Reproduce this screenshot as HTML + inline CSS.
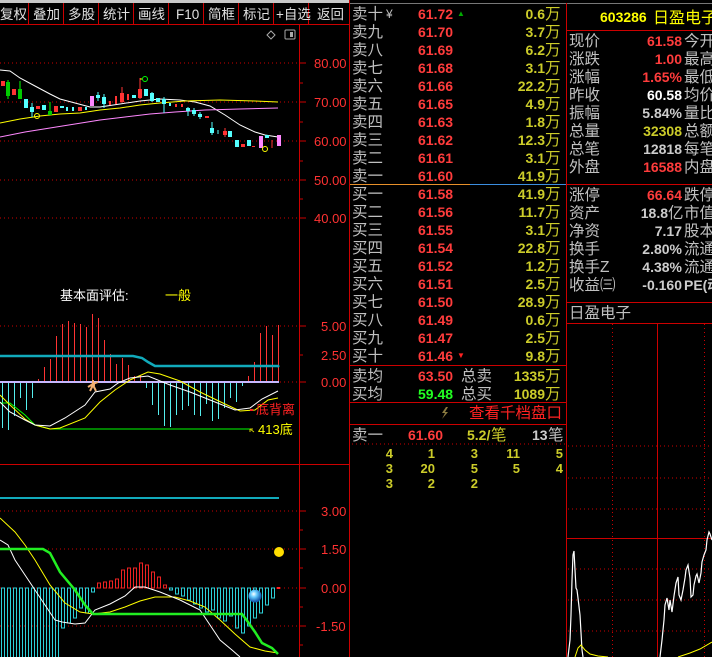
<!DOCTYPE html>
<html><head><meta charset="utf-8"><style>
html,body{margin:0;padding:0;background:#000;width:712px;height:657px;overflow:hidden}
svg{display:block}
.l{font-family:"Liberation Sans","WenQuanYi Zen Hei","Noto Sans CJK SC",sans-serif;font-size:15.5px;fill:#c0c0c0}
.n{font-family:"Liberation Sans",sans-serif;font-size:14px;font-weight:bold}
.ax{font-family:"Liberation Sans",sans-serif;font-size:13px;fill:#ff3232}
.tb{font-family:"Liberation Sans","WenQuanYi Zen Hei","Noto Sans CJK SC",sans-serif;font-size:13.5px;fill:#e0e0e0}
</style></head><body>
<svg width="712" height="657" viewBox="0 0 712 657" xmlns="http://www.w3.org/2000/svg">
<rect width="712" height="657" fill="#000"/>
<rect x="0" y="0" width="350" height="3" fill="#c8c8c8"/>
<line x1="0" y1="24.5" x2="350" y2="24.5" stroke="#c00" />
<g stroke="#c00">
<line x1="28.5" y1="3" x2="28.5" y2="24"/><line x1="63.5" y1="3" x2="63.5" y2="24"/><line x1="98.5" y1="3" x2="98.5" y2="24"/><line x1="133.5" y1="3" x2="133.5" y2="24"/><line x1="168.5" y1="3" x2="168.5" y2="24"/><line x1="203.5" y1="3" x2="203.5" y2="24"/><line x1="238.5" y1="3" x2="238.5" y2="24"/><line x1="273.5" y1="3" x2="273.5" y2="24"/><line x1="308.5" y1="3" x2="308.5" y2="24"/><line x1="349.5" y1="0" x2="349.5" y2="657"/>
</g>
<g class="tb">
<text x="0" y="19">复权</text><text x="33" y="19">叠加</text><text x="68" y="19">多股</text><text x="103" y="19">统计</text><text x="138" y="19">画线</text><text x="176" y="19">F10</text><text x="208" y="19">简框</text><text x="243" y="19">标记</text><text x="276" y="19">+自选</text><text x="317" y="19">返回</text>
</g>
<line x1="299.5" y1="25" x2="299.5" y2="657" stroke="#c00"/>
<g stroke="#c00" stroke-dasharray="1,3">
<line x1="0" y1="63" x2="300" y2="63"/><line x1="0" y1="102" x2="300" y2="102"/><line x1="0" y1="141" x2="300" y2="141"/><line x1="0" y1="180" x2="300" y2="180"/><line x1="0" y1="218" x2="300" y2="218"/>
</g>
<g stroke="#c00"><line x1="300" y1="63" x2="306" y2="63"/><line x1="300" y1="83" x2="303" y2="83"/><line x1="300" y1="102" x2="306" y2="102"/><line x1="300" y1="122" x2="303" y2="122"/><line x1="300" y1="141" x2="306" y2="141"/><line x1="300" y1="161" x2="303" y2="161"/><line x1="300" y1="180" x2="306" y2="180"/><line x1="300" y1="199" x2="303" y2="199"/><line x1="300" y1="218" x2="306" y2="218"/></g>
<g class="ax"><text x="314" y="68">80.00</text><text x="314" y="107">70.00</text><text x="314" y="146">60.00</text><text x="314" y="185">50.00</text><text x="314" y="223">40.00</text></g>
<path d="M267 35 L271 31 L275 35 L271 39Z" fill="none" stroke="#aaa"/>
<rect x="285" y="30" width="10" height="9" fill="none" stroke="#aaa" rx="1"/><rect x="290" y="32" width="3" height="5" fill="#aaa"/>
<polyline fill="none" stroke="#fff" points="0,70 10,71 20,78 35,86 50,94 60,99 75,103 90,107 100,107 120,104 140,101 160,99 180,100 195,102 210,106 225,115 240,125 255,132 265,135 278,137"/>
<polyline fill="none" stroke="#ff0" points="0,123 20,119 40,116 60,114 80,113 100,110 120,108 140,105 160,103 185,101 220,100 255,101 278,102"/>
<polyline fill="none" stroke="#f8f" points="0,137 25,132 50,128 75,124 100,120 125,117 150,114 175,112 205,110 240,109 278,108"/>
<g>
<rect x="1" y="81" width="4" height="5" fill="#f33"/>
<line x1="8" y1="80" x2="8" y2="99" stroke="#0f0"/><rect x="6" y="82" width="4" height="14" fill="#0c0"/>
<rect x="12" y="89" width="4" height="6" fill="#f33"/>
<line x1="20" y1="81" x2="20" y2="99" stroke="#0f0"/><rect x="18" y="89" width="4" height="10" fill="#0c0"/>
<rect x="24" y="99" width="4" height="9" fill="#5ff"/>
<line x1="32" y1="103" x2="32" y2="117" stroke="#5ff"/><rect x="30" y="107" width="4" height="5" fill="#5ff"/>
<rect x="36" y="106" width="4" height="3" fill="#f33"/>
<rect x="42" y="105" width="4" height="5" fill="#5ff"/>
<line x1="50" y1="102" x2="50" y2="115" stroke="#0f0"/><rect x="48" y="111" width="4" height="4" fill="#0c0"/>
<rect x="54" y="106" width="4" height="6" fill="#f33"/>
<rect x="60" y="106" width="4" height="2" fill="#5ff"/><rect x="66" y="107" width="2" height="4" fill="#5ff"/><rect x="72" y="107" width="2" height="4" fill="#5ff"/>
<rect x="78" y="107" width="4" height="4" fill="#f33"/><rect x="85" y="107" width="2" height="3" fill="#5ff"/>
<rect x="90" y="96" width="4" height="10" fill="#f8f"/>
<line x1="98" y1="92" x2="98" y2="101" stroke="#5ff"/><rect x="96" y="95" width="4" height="3" fill="#5ff"/>
<line x1="104" y1="94" x2="104" y2="108" stroke="#5ff"/><rect x="102" y="97" width="4" height="7" fill="#5ff"/>
<rect x="109" y="101" width="2" height="4" fill="#f33"/><rect x="115" y="96" width="2" height="8" fill="#f33"/>
<line x1="122" y1="87" x2="122" y2="103" stroke="#f33"/><rect x="120" y="93" width="4" height="9" fill="#f33"/>
<rect x="127" y="94" width="2" height="6" fill="#f33"/><rect x="132" y="95" width="4" height="3" fill="#5ff"/>
<line x1="140" y1="78" x2="140" y2="99" stroke="#f33"/><rect x="138" y="89" width="4" height="9" fill="#f33"/>
<rect x="144" y="89" width="4" height="7" fill="#5ff"/>
<line x1="152" y1="92" x2="152" y2="102" stroke="#5ff"/><rect x="150" y="93" width="4" height="8" fill="#5ff"/>
<rect x="156" y="98" width="4" height="4" fill="#5ff"/>
<line x1="164" y1="97" x2="164" y2="113" stroke="#5ff"/><rect x="162" y="99" width="4" height="5" fill="#5ff"/>
<rect x="169" y="103" width="2" height="3" fill="#5ff"/><rect x="175" y="104" width="2" height="3" fill="#f33"/><rect x="181" y="104" width="2" height="3" fill="#f33"/>
<line x1="188" y1="107" x2="188" y2="116" stroke="#5ff"/><rect x="186" y="108" width="4" height="3" fill="#5ff"/>
<line x1="194" y1="108" x2="194" y2="116" stroke="#5ff"/><rect x="192" y="110" width="4" height="4" fill="#5ff"/>
<line x1="200" y1="112" x2="200" y2="119" stroke="#5ff"/><rect x="198" y="114" width="4" height="3" fill="#5ff"/>
<rect x="205" y="116" width="4" height="2" fill="#f33"/>
<line x1="212" y1="122" x2="212" y2="135" stroke="#5ff"/><rect x="210" y="128" width="4" height="5" fill="#5ff"/>
<line x1="218" y1="130" x2="218" y2="134" stroke="#5ff"/>
<line x1="225" y1="128" x2="225" y2="137" stroke="#f33"/><rect x="223" y="131" width="4" height="4" fill="#f33"/>
<rect x="228" y="131" width="4" height="6" fill="#5ff"/>
<rect x="235" y="140" width="4" height="7" fill="#5ff"/>
<rect x="241" y="144" width="4" height="3" fill="#f33"/>
<rect x="247" y="140" width="4" height="6" fill="#5ff"/>
<rect x="252" y="146" width="3" height="1" fill="#f33"/>
<rect x="259" y="136" width="4" height="12" fill="#f8f"/>
<rect x="265" y="135" width="4" height="3" fill="#5ff"/>
<line x1="272" y1="140" x2="272" y2="148" stroke="#f33"/>
<rect x="277" y="135" width="4" height="11" fill="#f8f"/>
</g>
<circle cx="145" cy="79" r="2.5" fill="none" stroke="#0f0"/><line x1="140" y1="79" x2="142" y2="79" stroke="#ff0"/>
<circle cx="37" cy="116" r="2.5" fill="none" stroke="#ff0"/>
<circle cx="265" cy="149" r="2.5" fill="none" stroke="#ff0"/>
<text x="60" y="300" class="l" style="fill:#fff;font-size:13px">基本面评估:</text>
<text x="165" y="300" class="l" style="fill:#ff0;font-size:13px">一般</text>
<g stroke="#c00" stroke-dasharray="1,3"><line x1="0" y1="326" x2="300" y2="326"/><line x1="0" y1="382" x2="300" y2="382"/></g>
<g stroke="#c00"><line x1="300" y1="326" x2="306" y2="326"/><line x1="300" y1="355" x2="303" y2="355"/><line x1="300" y1="382" x2="306" y2="382"/></g>
<g class="ax"><text x="321" y="331">5.00</text><text x="321" y="360">2.50</text><text x="321" y="387">0.00</text></g>
<g stroke="#f33">
<line x1="38.5" y1="382" x2="38.5" y2="379"/><line x1="44.5" y1="382" x2="44.5" y2="367"/><line x1="50.5" y1="382" x2="50.5" y2="359"/><line x1="56.5" y1="382" x2="56.5" y2="336"/><line x1="62.5" y1="382" x2="62.5" y2="324"/><line x1="68.5" y1="382" x2="68.5" y2="321"/><line x1="74.5" y1="382" x2="74.5" y2="323"/><line x1="80.5" y1="382" x2="80.5" y2="324"/><line x1="86.5" y1="382" x2="86.5" y2="327"/><line x1="92.5" y1="382" x2="92.5" y2="314"/><line x1="98.5" y1="382" x2="98.5" y2="318"/><line x1="104.5" y1="382" x2="104.5" y2="340"/><line x1="110.5" y1="382" x2="110.5" y2="354"/><line x1="116.5" y1="382" x2="116.5" y2="364"/><line x1="122.5" y1="382" x2="122.5" y2="358"/><line x1="128.5" y1="382" x2="128.5" y2="365"/><line x1="134.5" y1="382" x2="134.5" y2="376"/><line x1="140.5" y1="382" x2="140.5" y2="375"/>
<line x1="248.5" y1="382" x2="248.5" y2="376"/><line x1="254.5" y1="382" x2="254.5" y2="362"/><line x1="260.5" y1="382" x2="260.5" y2="333"/><line x1="266.5" y1="382" x2="266.5" y2="326"/><line x1="272.5" y1="382" x2="272.5" y2="335"/><line x1="278.5" y1="382" x2="278.5" y2="325"/>
</g>
<g stroke="#5ee">
<line x1="2.5" y1="382" x2="2.5" y2="428"/><line x1="8.5" y1="382" x2="8.5" y2="430"/><line x1="14.5" y1="382" x2="14.5" y2="416"/><line x1="20.5" y1="382" x2="20.5" y2="398"/><line x1="26.5" y1="382" x2="26.5" y2="410"/><line x1="32.5" y1="382" x2="32.5" y2="398"/>
<line x1="146.5" y1="382" x2="146.5" y2="388"/><line x1="152.5" y1="382" x2="152.5" y2="405"/><line x1="158.5" y1="382" x2="158.5" y2="415"/><line x1="164.5" y1="382" x2="164.5" y2="426"/><line x1="170.5" y1="382" x2="170.5" y2="427"/><line x1="176.5" y1="382" x2="176.5" y2="415"/><line x1="182.5" y1="382" x2="182.5" y2="410"/><line x1="188.5" y1="382" x2="188.5" y2="406"/><line x1="194.5" y1="382" x2="194.5" y2="415"/><line x1="200.5" y1="382" x2="200.5" y2="416"/><line x1="206.5" y1="382" x2="206.5" y2="404"/><line x1="212.5" y1="382" x2="212.5" y2="421"/><line x1="218.5" y1="382" x2="218.5" y2="419"/><line x1="224.5" y1="382" x2="224.5" y2="408"/><line x1="230.5" y1="382" x2="230.5" y2="398"/><line x1="236.5" y1="382" x2="236.5" y2="402"/><line x1="242.5" y1="382" x2="242.5" y2="386"/>
</g>
<line x1="0" y1="382" x2="279" y2="382" stroke="#c8b8ff" stroke-width="2"/>
<polyline fill="none" stroke="#1ab" stroke-width="2.5" points="0,356 133,356 142,358 148,362 155,366 278,366 279,367"/>
<polyline fill="none" stroke="#0f0" points="0,403 10,403 25,415 35,425 50,429 250,429"/>
<polyline fill="none" stroke="#ff0" points="0,395 10,405 25,419 35,425 50,429 60,428 85,418 100,402 115,390 130,380 148,372 160,374 180,381 200,392 225,404 240,411 255,410 268,400 278,398"/>
<polyline fill="none" stroke="#fff" points="0,402 10,412 25,420 35,425 50,426 65,418 85,405 95,392 110,389 118,383 130,378 148,376 170,385 190,392 210,400 235,410 250,408 262,399 278,391"/>
<path d="M93 385 l-3 6 M93 385 l3 6 M93 384 l-5 3 M93 384 l5 -2 M93 380 v5" stroke="#f3b070" stroke-width="2" fill="none"/>
<circle cx="93" cy="385" r="2" fill="#f3b070"/>
<text x="256" y="414" class="l" style="fill:#f22;font-size:13px">底背离</text>
<text x="258" y="434" class="l" style="fill:#ff0;font-size:13px">413底</text>
<path d="M250 429 l4 3 M250 429 l3 0 M250 429 l0 3" stroke="#cc0" fill="none"/>
<rect x="250" y="409" width="3" height="2" fill="#f22"/>
<line x1="0" y1="464.5" x2="350" y2="464.5" stroke="#c00"/>
<g stroke="#c00" stroke-dasharray="1,3"><line x1="0" y1="511" x2="300" y2="511"/><line x1="0" y1="549" x2="300" y2="549"/><line x1="0" y1="588" x2="300" y2="588"/><line x1="0" y1="626" x2="300" y2="626"/></g>
<g stroke="#c00"><line x1="300" y1="511" x2="306" y2="511"/><line x1="300" y1="530" x2="303" y2="530"/><line x1="300" y1="549" x2="306" y2="549"/><line x1="300" y1="568" x2="303" y2="568"/><line x1="300" y1="588" x2="306" y2="588"/><line x1="300" y1="607" x2="303" y2="607"/><line x1="300" y1="626" x2="306" y2="626"/><line x1="300" y1="645" x2="303" y2="645"/></g>
<g class="ax"><text x="321" y="516">3.00</text><text x="321" y="554">1.50</text><text x="321" y="593">0.00</text><text x="316" y="631">-1.50</text></g>
<line x1="0" y1="498" x2="279" y2="498" stroke="#1ab" stroke-width="2"/>
<g fill="none" stroke="#2cd0d8">
<rect x="1.5" y="588" width="3" height="87"/><rect x="7.5" y="588" width="3" height="80"/><rect x="13.5" y="588" width="3" height="88"/><rect x="19.5" y="588" width="3" height="80"/><rect x="25.5" y="588" width="3" height="88"/><rect x="31.5" y="588" width="3" height="80"/><rect x="37.5" y="588" width="3" height="88"/><rect x="43.5" y="588" width="3" height="80"/><rect x="49.5" y="588" width="3" height="88"/><rect x="55.5" y="588" width="3" height="80"/><rect x="61.5" y="588" width="3" height="40"/><rect x="67.5" y="588" width="3" height="35"/><rect x="73.5" y="588" width="3" height="30"/><rect x="79.5" y="588" width="3" height="20"/><rect x="85.5" y="588" width="3" height="25"/><rect x="91.5" y="588" width="3" height="4"/>
<rect x="169.5" y="588" width="3" height="2"/><rect x="175.5" y="588" width="3" height="6"/><rect x="181.5" y="588" width="3" height="8"/><rect x="187.5" y="588" width="3" height="12"/><rect x="193.5" y="588" width="3" height="16"/><rect x="199.5" y="588" width="3" height="20"/><rect x="205.5" y="588" width="3" height="24"/><rect x="211.5" y="588" width="3" height="22"/><rect x="217.5" y="588" width="3" height="30"/><rect x="223.5" y="588" width="3" height="33"/><rect x="229.5" y="588" width="3" height="28"/><rect x="235.5" y="588" width="3" height="40"/><rect x="241.5" y="588" width="3" height="45"/><rect x="247.5" y="588" width="3" height="38"/><rect x="253.5" y="588" width="3" height="30"/><rect x="259.5" y="588" width="3" height="25"/><rect x="265.5" y="588" width="3" height="17"/><rect x="271.5" y="588" width="3" height="10"/>
</g>
<g fill="none" stroke="#e22">
<rect x="97.5" y="583" width="3" height="5"/><rect x="103.5" y="582" width="3" height="6"/><rect x="109.5" y="581" width="3" height="7"/><rect x="115.5" y="579" width="3" height="9"/><rect x="121.5" y="570" width="3" height="18"/><rect x="127.5" y="568" width="3" height="20"/><rect x="133.5" y="568" width="3" height="20"/><rect x="139.5" y="563" width="3" height="25"/><rect x="145.5" y="565" width="3" height="23"/><rect x="151.5" y="572" width="3" height="16"/><rect x="157.5" y="577" width="3" height="11"/><rect x="163.5" y="585" width="3" height="3"/>
</g>
<rect x="277" y="587" width="3" height="2" fill="#f22"/>
<polyline fill="none" stroke="#ff0" points="0,518 15,532 25,545 35,560 50,585 65,603 80,612 93,614 110,612 125,607 140,601 155,597 175,597 190,601 205,607 220,620 235,634 250,647 265,651 278,653"/>
<polyline fill="none" stroke="#fff" points="0,540 8,545 15,560 25,575 35,590 45,605 55,620 62,622 75,624 85,623 95,610 110,604 125,596 135,587 145,587 160,592 180,600 200,610 210,625 220,640 232,650 240,657"/>
<polyline fill="none" stroke="#2e2" stroke-width="2.5" points="0,549 43,549 50,553 60,572 75,590 85,605 93,614 242,614 248,622 255,632 262,643 272,648 278,654"/>
<circle cx="279" cy="552" r="5" fill="#fd0"/>
<defs><radialGradient id="b" cx="40%" cy="35%" r="60%"><stop offset="0" stop-color="#fff"/><stop offset=".4" stop-color="#6cf"/><stop offset="1" stop-color="#15a"/></radialGradient></defs>
<circle cx="255" cy="596" r="6.5" fill="url(#b)"/>
<line x1="350" y1="3.5" x2="712" y2="3.5" stroke="#777"/>
<line x1="566.5" y1="3" x2="566.5" y2="657" stroke="#c00"/>
<line x1="350" y1="184.5" x2="470" y2="184.5" stroke="#e8902a"/>
<line x1="470" y1="184.5" x2="566" y2="184.5" stroke="#3b8ee0"/>
<g class="l">
<text x="352" y="19">卖十</text><text x="352" y="37">卖九</text><text x="352" y="55">卖八</text><text x="352" y="73">卖七</text><text x="352" y="91">卖六</text><text x="352" y="109">卖五</text><text x="352" y="127">卖四</text><text x="352" y="145">卖三</text><text x="352" y="163">卖二</text><text x="352" y="181">卖一</text>
<text x="352" y="199">买一</text><text x="352" y="217">买二</text><text x="352" y="235">买三</text><text x="352" y="253">买四</text><text x="352" y="271">买五</text><text x="352" y="289">买六</text><text x="352" y="307">买七</text><text x="352" y="325">买八</text><text x="352" y="343">买九</text><text x="352" y="361">买十</text>
<text x="352" y="381">卖均</text><text x="352" y="399">买均</text>
<text x="461" y="381">总卖</text><text x="461" y="399">总买</text>
<text x="352" y="440">卖一</text>
</g>
<text x="386" y="18" class="l" style="font-size:12px">¥</text>
<g class="n" fill="#ff3c3c">
<text x="418" y="19">61.72</text><text x="418" y="37">61.70</text><text x="418" y="55">61.69</text><text x="418" y="73">61.68</text><text x="418" y="91">61.66</text><text x="418" y="109">61.65</text><text x="418" y="127">61.63</text><text x="418" y="145">61.62</text><text x="418" y="163">61.61</text><text x="418" y="181">61.60</text>
<text x="418" y="199">61.58</text><text x="418" y="217">61.56</text><text x="418" y="235">61.55</text><text x="418" y="253">61.54</text><text x="418" y="271">61.52</text><text x="418" y="289">61.51</text><text x="418" y="307">61.50</text><text x="418" y="325">61.49</text><text x="418" y="343">61.47</text><text x="418" y="361">61.46</text>
<text x="418" y="381">63.50</text><text x="408" y="440">61.60</text>
</g>
<text x="418" y="399" class="n" fill="#2f2">59.48</text>
<text x="457" y="16" fill="#0a0" font-size="8" font-family="Liberation Sans">▲</text>
<text x="457" y="358" fill="#f22" font-size="8" font-family="Liberation Sans">▼</text>
<g class="n" fill="#cccc2a" text-anchor="end">
<text x="545" y="19">0.6</text><text x="545" y="37">3.7</text><text x="545" y="55">6.2</text><text x="545" y="73">3.1</text><text x="545" y="91">22.2</text><text x="545" y="109">4.9</text><text x="545" y="127">1.8</text><text x="545" y="145">12.3</text><text x="545" y="163">3.1</text><text x="545" y="181">41.9</text>
<text x="545" y="199">41.9</text><text x="545" y="217">11.7</text><text x="545" y="235">3.1</text><text x="545" y="253">22.8</text><text x="545" y="271">1.2</text><text x="545" y="289">2.5</text><text x="545" y="307">28.9</text><text x="545" y="325">0.6</text><text x="545" y="343">2.5</text><text x="545" y="361">9.8</text>
<text x="545" y="381">1335</text><text x="545" y="399">1089</text>
</g>
<g class="l" style="fill:#cccc2a">
<text x="545" y="19">万</text><text x="545" y="37">万</text><text x="545" y="55">万</text><text x="545" y="73">万</text><text x="545" y="91">万</text><text x="545" y="109">万</text><text x="545" y="127">万</text><text x="545" y="145">万</text><text x="545" y="163">万</text><text x="545" y="181">万</text>
<text x="545" y="199">万</text><text x="545" y="217">万</text><text x="545" y="235">万</text><text x="545" y="253">万</text><text x="545" y="271">万</text><text x="545" y="289">万</text><text x="545" y="307">万</text><text x="545" y="325">万</text><text x="545" y="343">万</text><text x="545" y="361">万</text>
<text x="545" y="381">万</text><text x="545" y="399">万</text>
</g>
<g stroke="#c00"><line x1="350" y1="365.5" x2="566" y2="365.5"/><line x1="350" y1="402.5" x2="566" y2="402.5"/><line x1="350" y1="424.5" x2="566" y2="424.5"/></g>
<path d="M446 407 l-4 6 h3 l-3 6 l6 -7 h-3 l3 -5z" fill="#8a7a40"/>
<text x="469" y="418" class="l" style="fill:#f22">查看千档盘口</text>
<text x="467" y="440" class="n" fill="#cccc2a">5.2/</text><text x="491" y="440" class="l" style="fill:#cccc2a">笔</text>
<text x="532" y="440" class="n" fill="#ccc">13</text><text x="548" y="440" class="l">笔</text>
<line x1="352" y1="444" x2="566" y2="444" stroke="#c00" stroke-dasharray="1,3"/>
<g class="n" fill="#cccc2a" text-anchor="end" style="font-size:13px">
<text x="393" y="458">4</text><text x="435" y="458">1</text><text x="478" y="458">3</text><text x="520" y="458">11</text><text x="563" y="458">5</text>
<text x="393" y="473">3</text><text x="435" y="473">20</text><text x="478" y="473">5</text><text x="520" y="473">5</text><text x="563" y="473">4</text>
<text x="393" y="488">3</text><text x="435" y="488">2</text><text x="478" y="488">2</text>
</g>
<text x="600" y="22" class="n" fill="#ff0" style="font-size:14px">603286</text>
<text x="653" y="23" class="l" style="fill:#ff0;font-size:16px">日盈电子</text>
<g stroke="#c00"><line x1="567" y1="30.5" x2="712" y2="30.5"/><line x1="567" y1="184.5" x2="712" y2="184.5"/><line x1="567" y1="302.5" x2="712" y2="302.5"/><line x1="567" y1="323.5" x2="712" y2="323.5"/></g>
<g class="l">
<text x="569" y="46">现价</text><text x="569" y="64">涨跌</text><text x="569" y="82">涨幅</text><text x="569" y="100">昨收</text><text x="569" y="118">振幅</text><text x="569" y="136">总量</text><text x="569" y="154">总笔</text><text x="569" y="172">外盘</text>
<text x="569" y="200">涨停</text><text x="569" y="218">资产</text><text x="569" y="236">净资</text><text x="569" y="254">换手</text><text x="569" y="272">换手Z</text><text x="569" y="290">收益㈢</text>
<text x="684" y="46">今开</text><text x="684" y="64">最高</text><text x="684" y="82">最低</text><text x="684" y="100">均价</text><text x="684" y="118">量比</text><text x="684" y="136">总额</text><text x="684" y="154">每笔</text><text x="684" y="172">内盘</text>
<text x="684" y="200">跌停</text><text x="684" y="218">市值</text><text x="684" y="236">股本</text><text x="684" y="254">流通</text><text x="684" y="272">流通</text>
<text x="569" y="318">日盈电子</text>
</g>
<text x="684" y="290" class="n" fill="#ccc">PE(动</text>
<g class="n" text-anchor="end">
<text x="682" y="46" fill="#ff3c3c">61.58</text><text x="682" y="64" fill="#ff3c3c">1.00</text><text x="682" y="82" fill="#ff3c3c">1.65%</text><text x="682" y="100" fill="#fff">60.58</text><text x="682" y="118" fill="#ccc">5.84%</text><text x="682" y="136" fill="#cccc2a">32308</text><text x="682" y="154" fill="#ccc">12818</text><text x="682" y="172" fill="#ff3c3c">16588</text>
<text x="682" y="200" fill="#ff3c3c">66.64</text><text x="668" y="218" fill="#ccc">18.8</text><text x="682" y="236" fill="#ccc">7.17</text><text x="682" y="254" fill="#ccc">2.80%</text><text x="682" y="272" fill="#ccc">4.38%</text><text x="682" y="290" fill="#ccc">-0.160</text>
</g>
<text x="668" y="218" class="l">亿</text>
<g stroke="#c00" stroke-dasharray="1,3">
<line x1="568" y1="446" x2="712" y2="446"/><line x1="568" y1="478" x2="712" y2="478"/><line x1="568" y1="509" x2="712" y2="509"/><line x1="568" y1="569" x2="712" y2="569"/><line x1="568" y1="600" x2="712" y2="600"/><line x1="568" y1="631" x2="712" y2="631"/>
<line x1="612.5" y1="324" x2="612.5" y2="657"/><line x1="704.5" y1="324" x2="704.5" y2="657"/>
</g>
<line x1="657.5" y1="324" x2="657.5" y2="657" stroke="#c00"/>
<line x1="567" y1="538.5" x2="712" y2="538.5" stroke="#c00"/>
<polyline fill="none" stroke="#fff" stroke-width="1.2" points="568,657 570,640 571,615 572,580 573,555 574,551 575,570 576,588 577,590 578,598 580,615 582,650 583,657"/>
<polyline fill="none" stroke="#fff" stroke-width="1.2" points="660,657 662,640 664,620 665,605 667,598 669,610 670,600 672,612 674,596 676,583 678,577 679,595 681,600 683,590 685,578 686,570 688,565 690,578 691,597 693,595 694,585 696,576 697,574 699,583 701,573 702,562 704,555 706,550 707,540 709,532 710,534 712,540"/>
<polyline fill="none" stroke="#ff0" points="575,657 578,648 581,645 585,650 590,654 598,656 608,657"/>
<polyline fill="none" stroke="#ff0" points="678,657 690,653 700,649 712,642"/>
</svg>
</body></html>
